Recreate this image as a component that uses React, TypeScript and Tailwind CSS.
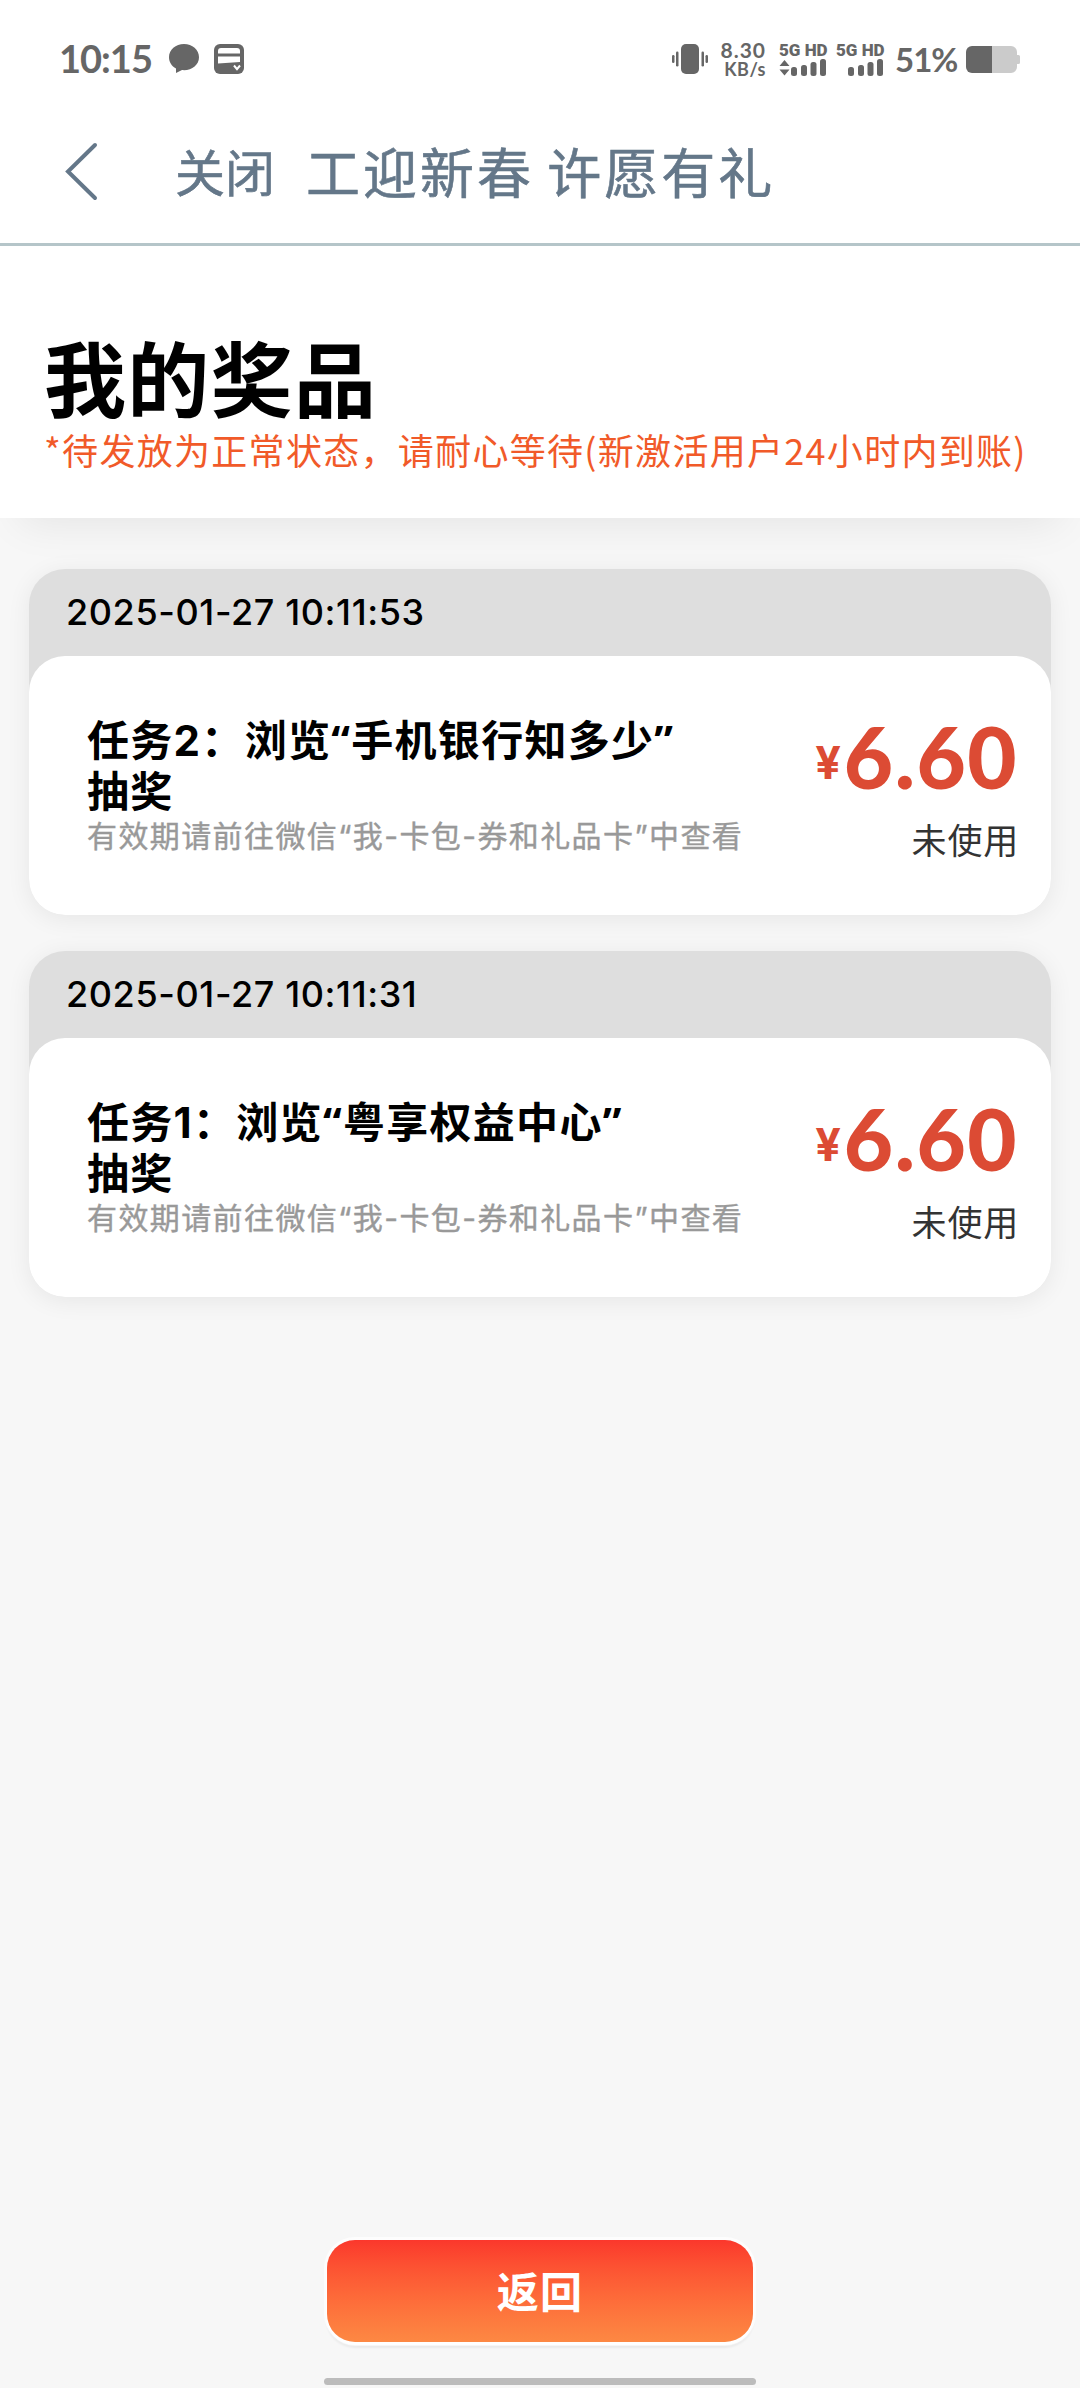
type Prize = {
  time: string
  label: string
  before: string
  name: string
  amount: string
  status: string
}

const PRIZES: Prize[] = [
  { time: '2025-01-27 10:11:53', label: '任务2', before: '：浏览', name: '手机银行知多少', amount: '6.60', status: '未使用' },
  { time: '2025-01-27 10:11:31', label: '任务1', before: '：浏览', name: '粤享权益中心', amount: '6.60', status: '未使用' },
]

export default function App() {
  return (
    <div className="flex h-[2388px] w-[1080px] flex-col overflow-hidden bg-[#f7f7f7] font-['Inter','Noto_Sans_CJK_SC',sans-serif]">
      <header className="border-b-[3px] border-[#b5c5c9] bg-white">
        <StatusBar />
        <NavBar />
      </header>

      <section className="h-[272px] bg-white pt-[96px] pl-[44px] shadow-[0_25px_40px_-20px_rgba(0,0,0,0.08)]">
        <h1 className="text-[82px] leading-[80px] font-bold tracking-[1.3px] text-black">我的奖品</h1>
        <p className="mt-[2px] font-['Noto_Sans_CJK_SC',sans-serif] text-[36px] leading-[50px] tracking-[1.3px] whitespace-nowrap text-[#f15a29]">
          *待发放为正常状态，请耐心等待(新激活用户24小时内到账)
        </p>
      </section>

      <main className="flex flex-1 flex-col gap-9 px-[29px] pt-[51px]">
        {PRIZES.map((p) => (
          <PrizeCard key={p.time} prize={p} />
        ))}
      </main>

      <footer className="flex flex-col items-center pb-[3px]">
        <button className="h-[102px] w-[426px] rounded-[28px] bg-linear-to-b from-[#fb372c] to-[#fd8843] text-[42px] leading-[105px] font-bold tracking-[1.3px] text-white shadow-[0_0_0_3px_rgba(255,255,255,0.7),0_3px_2px_1px_#fff,0_5px_3px_rgba(0,0,0,0.12)]">
          返回
        </button>
        <div className="mt-9 h-[7px] w-[432px] rounded-full bg-[#bcbcbc]" />
      </footer>
    </div>
  )
}

function StatusBar() {
  return (
    <div className="flex h-[104px] items-center pt-[14px] pr-[60px] pl-[59px] text-[#666]">
      <span className="-mt-[3px] w-[110px] font-['Lato'] text-[38px] leading-[40px] font-bold tracking-[-1px]">10:15</span>
      <ChatIcon />
      <CardIcon />
      <div className="ml-auto flex items-center">
        <VibrateIcon />
        <div className="-mt-[1px] ml-[12px] flex w-[46px] flex-col items-end font-['Lato'] font-bold">
          <span className="text-[21px] leading-[21px] tracking-[1px]">8.30</span>
          <span className="text-[18px] leading-[18px] tracking-[0.5px]">KB/s</span>
        </div>
        <div className="-mt-[1px] ml-[13px] flex gap-[10px]">
          <Signal arrows />
          <Signal />
        </div>
        <span className="ml-[12px] w-[71px] font-['Lato'] text-[33px] leading-[34px] font-bold tracking-[-1px]">51%</span>
        <BatteryIcon />
      </div>
    </div>
  )
}

function NavBar() {
  return (
    <div className="flex h-[139px] items-center pl-[64px] text-[#647789] [-webkit-text-stroke:0.6px]">
      <svg width="36" height="60" viewBox="0 0 36 60" fill="none" className="-mt-[6px]">
        <path d="M31 4 4 30.500 31 57" stroke="currentColor" strokeWidth="4" strokeLinecap="round" />
      </svg>
      <span className="ml-[75px] text-[50px] leading-[60px]">关闭</span>
      <span className="mt-[2px] ml-[31px] text-[54px] leading-[60px] tracking-[3px] [word-spacing:-5px]">工迎新春 许愿有礼</span>
    </div>
  )
}

function PrizeCard({ prize }: { prize: Prize }) {
  return (
    <article className="h-[346px] rounded-[36px] bg-[#dedede] shadow-[0_4px_24px_rgba(0,0,0,0.07)]">
      <div className="h-[87px] pl-[37px] text-[36px] leading-[86px] font-medium tracking-[0.6px] text-black">{prize.time}</div>
      <div className="flex h-[259px] justify-between rounded-[36px] bg-white pt-[59px] pr-[34px] pl-[58px]">
        <div>
          <h2 className="text-[42px] leading-[51px] font-bold tracking-[1.3px] whitespace-nowrap text-black">
            {prize.label}
            {prize.before}
            <span className="font-['Open_Sans','Noto_Sans_CJK_SC',sans-serif] leading-none">“{prize.name}”</span>
            <br />
            抽奖
          </h2>
          <p className="text-[30px] leading-[38px] tracking-[1.4px] whitespace-nowrap text-[#999] [-webkit-text-stroke:0.4px]">
            有效期请前往微信“我-卡包-券和礼品卡”中查看
          </p>
        </div>
        <div className="flex flex-col items-end">
          <div className="-mt-px flex items-end text-[#dc4b34]">
            <span className="mr-[3px] mb-[13px] text-[45px] leading-[44px] font-bold">¥</span>
            <span className="-mr-px font-['Lato'] text-[85px] leading-[84px] font-black tracking-[1.5px]">{prize.amount}</span>
          </div>
          <span className="mt-[23px] -mr-[2px] text-[35px] leading-[40px] tracking-[0.8px] text-[#333]">{prize.status}</span>
        </div>
      </div>
    </article>
  )
}

// 5G label with the four reception bars; the first SIM also shows the traffic arrows
function Signal({ arrows = false }: { arrows?: boolean }) {
  return (
    <div className="flex w-[47px] flex-col">
      <span className="font-['Roboto'] text-[17px] leading-[17px] font-black whitespace-nowrap">5G HD</span>
      <svg width="47" height="17" viewBox="0 0 47 17" fill="currentColor">
        {arrows && <path d="M5.500 1 10.500 7H.500ZM5.500 16.500.500 10.500h10Z" />}
        <rect x="12" y="8" width="6" height="9" rx="2.500" />
        <rect x="22" y="6" width="6" height="11" rx="2.500" />
        <rect x="31.500" y="3" width="6" height="14" rx="2.500" />
        <rect x="41" y="0" width="6" height="17" rx="2.500" />
      </svg>
    </div>
  )
}

function ChatIcon() {
  return (
    <svg width="30" height="30" viewBox="0 0 30 30" fill="currentColor">
      <path d="M15 0C6.700 0 0 5.700 0 13.200c0 4.800 2.700 8.900 7 11.200V29l6-2.900c.700.100 1.300.100 2 .100 8.300 0 15-5.600 15-13S23.300 0 15 0Z" />
    </svg>
  )
}

function CardIcon() {
  return (
    <svg width="30" height="30" viewBox="0 0 30 30" className="ml-[15px]">
      <rect width="30" height="30" rx="6" fill="currentColor" />
      <path d="M4 9.500V7a3 3 0 0 1 3-3h16a3 3 0 0 1 3 3v2.500ZM4 12.500h22V18L4 19.500Z" fill="#fff" />
      <path d="m20 21.500 3 3.700 3-3.700" fill="none" stroke="#fff" strokeWidth="2" />
    </svg>
  )
}

function VibrateIcon() {
  return (
    <svg width="36" height="30" viewBox="0 0 36 30" fill="currentColor">
      <rect x="9" width="18" height="30" rx="5" />
      <rect x="4" y="7.500" width="2.500" height="15" rx="1.200" />
      <rect x="29.500" y="7.500" width="2.500" height="15" rx="1.200" />
      <rect y="11" width="2.500" height="8" rx="1.200" />
      <rect x="33.500" y="11" width="2.500" height="8" rx="1.200" />
    </svg>
  )
}

function BatteryIcon() {
  return (
    <svg width="54" height="27" viewBox="0 0 54 27">
      <path d="M26 0h19a6 6 0 0 1 6 6v3h1.500A1.500 1.500 0 0 1 54 10.500v6a1.500 1.500 0 0 1-1.500 1.500H51v3a6 6 0 0 1-6 6H26Z" fill="#cbcbcb" />
      <path d="M26 0H6a6 6 0 0 0-6 6v15a6 6 0 0 0 6 6h20Z" fill="currentColor" />
    </svg>
  )
}
